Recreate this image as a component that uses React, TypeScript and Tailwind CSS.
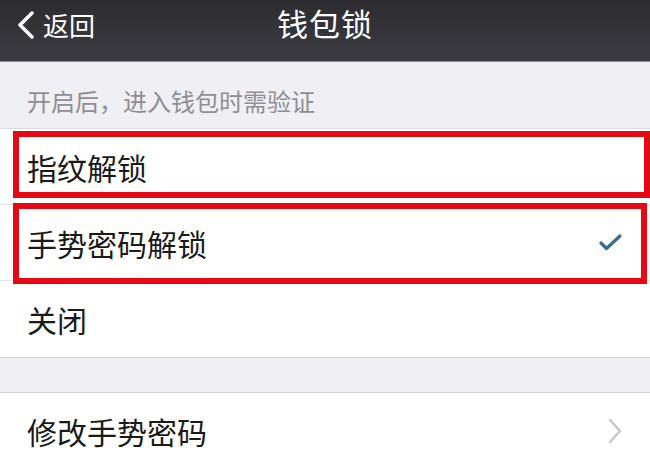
import React from "react";

const rows = [
  { label: "指纹解锁", checked: false },
  { label: "手势密码解锁", checked: true },
  { label: "关闭", checked: false },
];

function BackIcon() {
  return (
    <svg width="20" height="28" viewBox="0 0 20 28" fill="none">
      <path
        d="M16 2 L4 14 L16 26"
        stroke="#ffffff"
        strokeWidth="3.5"
        strokeLinecap="round"
        strokeLinejoin="round"
      />
    </svg>
  );
}

function CheckIcon() {
  return (
    <svg width="26" height="20" viewBox="0 0 26 20" fill="none">
      <path
        d="M4 10 L9.5 15.5 L23 3"
        stroke="#3e6b94"
        strokeWidth="3.2"
        strokeLinecap="round"
        strokeLinejoin="round"
      />
    </svg>
  );
}

function ChevronIcon() {
  return (
    <svg width="16" height="26" viewBox="0 0 16 26" fill="none">
      <path
        d="M3 2 L13 13 L3 24"
        stroke="#c7c7cc"
        strokeWidth="2.5"
        strokeLinecap="round"
        strokeLinejoin="round"
      />
    </svg>
  );
}

export default function App() {
  return (
    <div
      className="relative w-[650px] h-[467px] overflow-hidden bg-[#efeff4]"
      style={{ fontFamily: '"Noto Sans CJK SC", "Noto Sans", sans-serif' }}>
      {/* header */}
      <div className="h-[62px] bg-gradient-to-b from-[#2d2c31] to-[#3c3b41] border-b border-[#8f8e93] grid grid-cols-[1fr_auto_1fr] items-start">
        <div className="flex items-center gap-[7px] pl-[16px] mt-[11px] text-white text-[26px] leading-[28px]">
          <BackIcon />
          <span>返回</span>
        </div>
        <div className="mt-[7px] text-white text-[31px] leading-none tracking-[1px]">
          钱包锁
        </div>
        <div />
      </div>

      {/* section header */}
      <div className="h-[66px] flex items-end pb-[15px] pl-[27px] text-[24px] leading-none text-[#8e8e93]">
        开启后，进入钱包时需验证
      </div>

      {/* options */}
      <div className="bg-white border-t border-[#dcdce0]">
        {rows.map((row, i) => (
          <div
            key={i}
            className={
              i < rows.length - 1
                ? "h-[76px] flex items-center justify-between pl-[27px] pr-[27px] border-b border-[#e2e2e6]"
                : "h-[76px] flex items-center justify-between pl-[27px] pr-[27px]"
            }>
            <span className="text-[30px] leading-none text-[#1a1a1a]">
              {row.label}
            </span>
            {row.checked && <CheckIcon />}
          </div>
        ))}
      </div>

      {/* gap */}
      <div className="h-[36px] border-t border-b border-[#d3d3d8] bg-[#efeff4]" />

      {/* change password */}
      <div className="bg-white h-[76px] flex items-center justify-between pl-[27px] pr-[27px]">
        <span className="text-[30px] leading-none text-[#1a1a1a]">修改手势密码</span>
        <ChevronIcon />
      </div>

      {/* red annotation boxes */}
      <div className="absolute left-[13px] top-[131px] w-[637px] h-[67px] border-[6px] border-[#e50914]" />
      <div className="absolute left-[13px] top-[203px] w-[634px] h-[81px] border-[6px] border-[#e50914]" />
    </div>
  );
}
